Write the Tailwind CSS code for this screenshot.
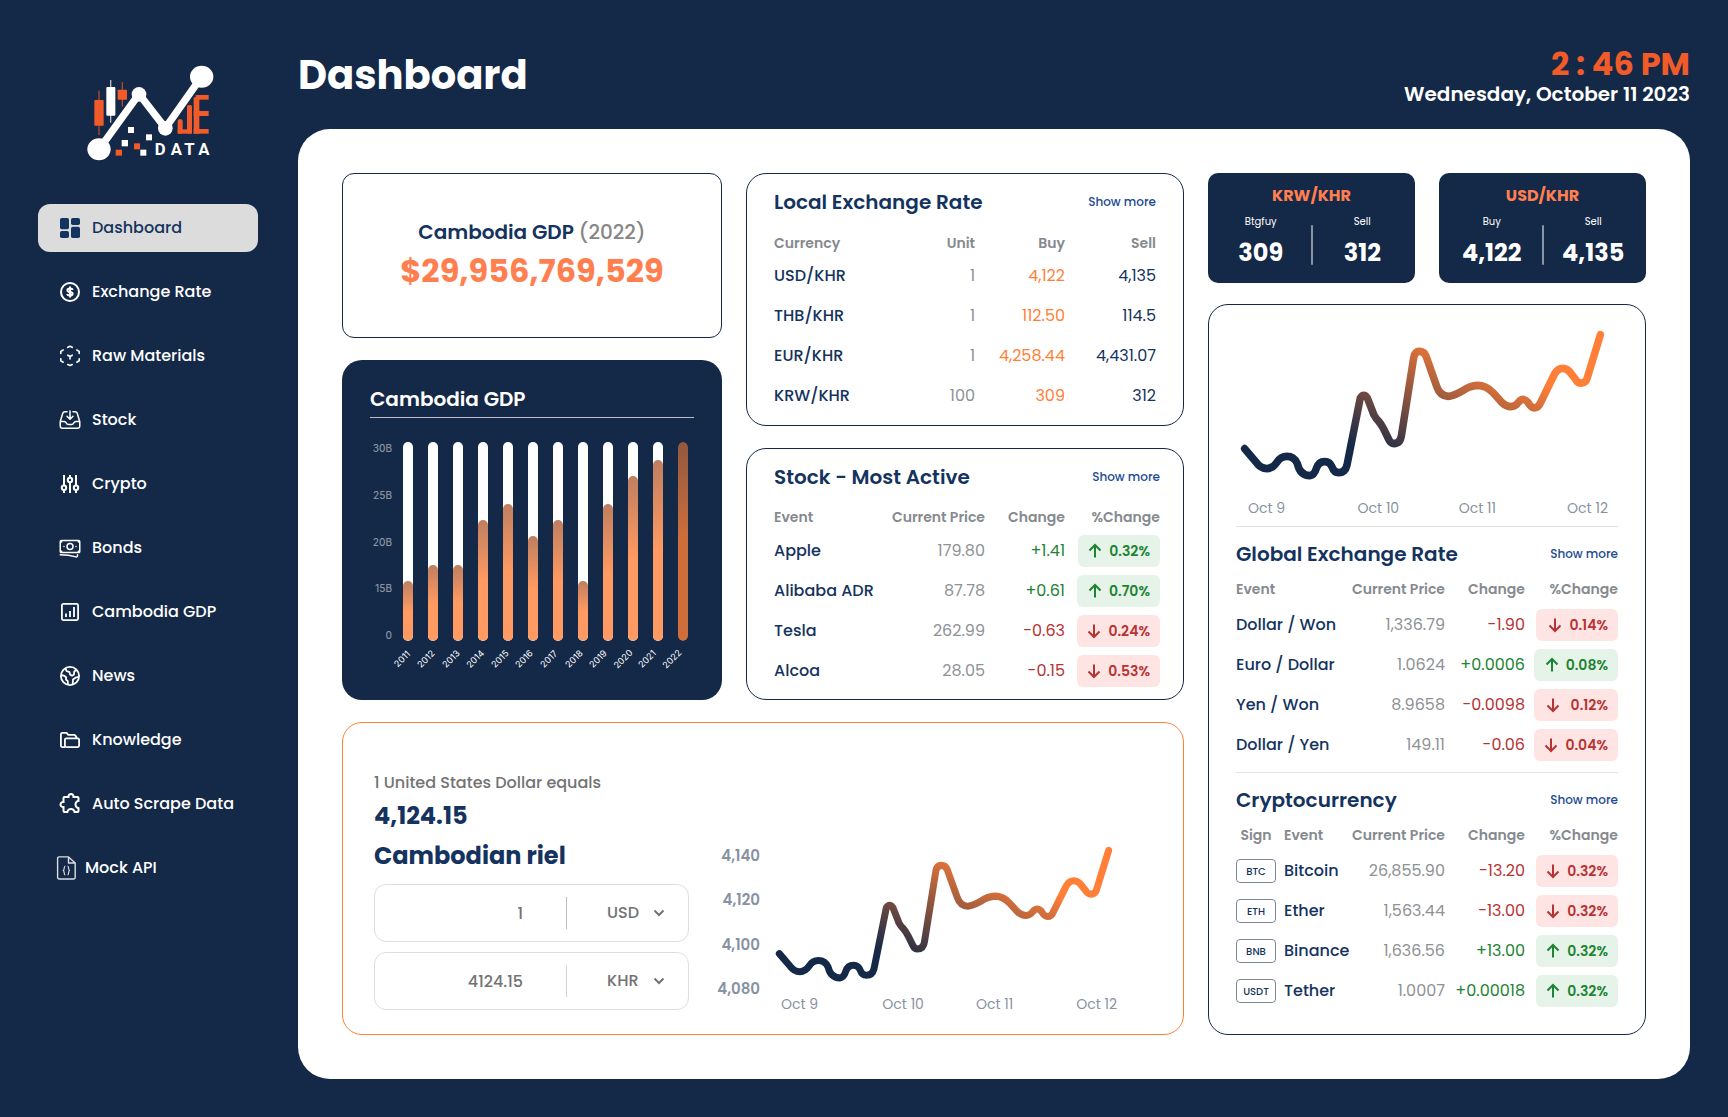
<!DOCTYPE html>
<html lang="en">
<head>
<meta charset="utf-8">
<meta name="viewport" content="width=device-width, initial-scale=1">
<title>JE Data – Dashboard</title>
<script src="https://cdn.jsdelivr.net/npm/@tailwindcss/browser@4"></script>
</head>
<body class="min-h-screen bg-[#142847] font-['Poppins','Inter',sans-serif] text-base text-[#14335e]">

<!-- Shared drawings -->
<svg class="absolute size-0" aria-hidden="true">
  <defs>
    <linearGradient id="trend-color" gradientUnits="userSpaceOnUse" x1="738" y1="500" x2="894" y2="154">
      <stop offset="0" stop-color="#142847"/>
      <stop offset="1" stop-color="#ff7f38"/>
    </linearGradient>
  </defs>
  <symbol id="trend" viewBox="255 105 1017 407" preserveAspectRatio="none"><path d="M268 427 300 464Q312 481 330 481Q346 481 357 465Q368 448 386 448Q406 448 415 468Q422 499 450 500Q462 499 468 480Q474 462 491 462Q506 462 512 478Q517 492 530 492Q548 492 553 472L590 290Q600 275 610 290L628 335Q634 346 640 351Q648 360 655 373L670 403Q675 413 684 413Q702 413 705 390L739 180Q742 163 755 163Q768 163 773 175L803 258Q812 284 835 285Q847 285 875 270Q895 256 917 255Q941 255 960 275L985 302Q997 313 1010 313Q1022 313 1031 301Q1044 286 1057 301Q1066 316 1075 316Q1087 316 1092 303L1131 225Q1140 209 1154 209Q1168 209 1178 224L1190 239Q1196 249 1206 249Q1218 249 1222 237L1259 118" fill="none" stroke="url(#trend-color)" stroke-width="21" stroke-linecap="round" stroke-linejoin="round"/></symbol>
  <symbol id="up" viewBox="0 0 16 16"><path d="M8 14.5V2.5M2.5 7.5 8 2l5.500 5.500" fill="none" stroke="currentColor" stroke-width="2"/></symbol>
  <symbol id="down" viewBox="0 0 16 16"><path d="M8 1.500V13.500M2.500 8.500 8 14l5.500-5.500" fill="none" stroke="currentColor" stroke-width="2"/></symbol>
</svg>

<div class="flex min-h-screen">
  <aside class="w-[298px] shrink-0 pt-[63px] pr-10 pl-[38px]">
    <svg class="mx-auto block h-[98px] w-[134px]" viewBox="183 69 402 294" role="img" aria-label="JE Data">
      <g fill="#f15a29">
        <rect x="223" y="180" width="28" height="77" rx="2"/><rect x="235" y="152" width="4" height="133" opacity=".7"/>
        <rect x="293" y="149" width="28" height="30" rx="2"/><rect x="305" y="126" width="4" height="74" opacity=".7"/>
        <rect x="287" y="329" width="19" height="18"/><rect x="342" y="310" width="18" height="18"/>
        <rect x="473" y="238" width="15" height="43" rx="5"/><rect x="473" y="268" width="43" height="13"/><rect x="501" y="195" width="15" height="86" rx="5"/>
        <rect x="521" y="172" width="17" height="109"/><rect x="527" y="165" width="39" height="14"/><rect x="521" y="213" width="45" height="15"/><rect x="521" y="267" width="45" height="14"/>
      </g>
      <g fill="#fff">
        <rect x="259" y="141" width="27" height="86" rx="3"/><rect x="270" y="120" width="4" height="128" opacity=".7"/>
        <rect x="324" y="261" width="18" height="18"/><rect x="378" y="283" width="18" height="18"/>
        <rect x="305" y="300" width="19" height="19"/><rect x="361" y="329" width="18" height="18"/>
        <path d="M237 328 357 162 436 264 545 110" fill="none" stroke="#fff" stroke-width="22"/>
        <ellipse cx="237" cy="328" rx="35" ry="33"/><circle cx="357" cy="163" r="22"/><circle cx="436" cy="265" r="22"/><ellipse cx="545" cy="110" rx="35" ry="33"/>
        <text x="404 452 493 535" y="346" font-family="Roboto, sans-serif" font-size="50" font-weight="700">DATA</text>
      </g>
    </svg>

    <nav class="mt-[43px] flex flex-col gap-4 font-medium text-white">
      <a href="#" aria-current="page" class="flex h-12 items-center gap-2.5 rounded-xl bg-[#dcdcdc] pl-5 text-[#14335e]">
        <svg class="size-6" viewBox="0 0 24 24" fill="currentColor"><rect x="2" y="2" width="9" height="11.300" rx="1.800"/><rect x="2" y="15" width="9" height="7" rx="1.800"/><rect x="13" y="2" width="9" height="7" rx="1.800"/><rect x="13" y="10.700" width="9" height="11.300" rx="1.800"/></svg>
        Dashboard</a>
      <a href="#" class="flex h-12 items-center gap-2.5 pl-5">
        <svg class="size-6" viewBox="0 0 24 24" fill="none" stroke="currentColor" stroke-width="2"><circle cx="12" cy="12" r="9"/><path d="M14.600 10c-.2-1-1.200-1.600-2.600-1.600s-2.600.6-2.600 1.800 1.100 1.600 2.600 1.800 2.600.7 2.600 1.800-1.100 1.800-2.600 1.800-2.500-.6-2.700-1.700M12 6.500v11"/></svg>
        Exchange Rate</a>
      <a href="#" class="flex h-12 items-center gap-2.5 pl-5">
        <svg class="size-6" viewBox="0 0 24 24" fill="none" stroke="currentColor" stroke-width="1.600" stroke-linecap="round" stroke-linejoin="round"><path d="M9.800 3.300 12 2.300l2.200 1M5.200 6 2.800 7.400v2M18.800 6l2.400 1.400v2M2.800 14.800v2l2.400 1.400M21.200 14.800v2l-2.400 1.400M9.800 20.600 12 21.600l2.200-1M9.800 11.200 12 12.500l2.200-1.300M12 12.500V15"/></svg>
        Raw Materials</a>
      <a href="#" class="flex h-12 items-center gap-2.5 pl-5">
        <svg class="size-6" viewBox="0 0 24 24" fill="none" stroke="currentColor" stroke-width="1.500" stroke-linecap="round" stroke-linejoin="round"><path d="M9 3.750H6.912a2.250 2.250 0 0 0-2.150 1.588L2.350 13.177a2.250 2.250 0 0 0-.1.661V18a2.250 2.250 0 0 0 2.250 2.250h15A2.250 2.250 0 0 0 21.750 18v-4.162c0-.224-.034-.447-.1-.661L19.240 5.338a2.250 2.250 0 0 0-2.150-1.588H15M2.250 13.500h3.860a2.250 2.250 0 0 1 2.012 1.244l.256.512a2.250 2.250 0 0 0 2.013 1.244h3.218a2.250 2.250 0 0 0 2.013-1.244l.256-.512a2.250 2.250 0 0 1 2.013-1.244h3.859M12 3v8.250m0 0-3-3m3 3 3-3"/></svg>
        Stock</a>
      <a href="#" class="flex h-12 items-center gap-2.5 pl-5">
        <svg class="size-6" viewBox="0 0 24 24" fill="none" stroke="currentColor" stroke-width="2"><path d="M6 3v10.500M6 18v3M12 3v2.700M12 10.300V21M18 3v10.500M18 18v3"/><circle cx="6" cy="15.800" r="2.200"/><circle cx="12" cy="8" r="2.200"/><circle cx="18" cy="15.800" r="2.200"/></svg>
        Crypto</a>
      <a href="#" class="flex h-12 items-center gap-2.5 pl-5">
        <svg class="size-6" viewBox="0 0 24 24" fill="none" stroke="currentColor" stroke-width="1.500" stroke-linecap="round" stroke-linejoin="round"><path d="M2.250 18.750a60.070 60.070 0 0 1 15.797 2.101c.727.198 1.453-.342 1.453-1.096V18.750M3.750 4.500v.75A.75.75 0 0 1 3 6h-.75m0 0v-.375c0-.621.504-1.125 1.125-1.125H20.250M2.250 6v9m18-10.500v.75c0 .414.336.75.75.75h.75m-1.500-1.500h.375c.621 0 1.125.504 1.125 1.125v9.750c0 .621-.504 1.125-1.125 1.125h-.375m1.500-1.500H21a.75.75 0 0 0-.75.75v.75m0 0H3.750m0 0h-.375a1.125 1.125 0 0 1-1.125-1.125V15m1.500 1.500v-.75A.75.75 0 0 0 3 15h-.75M15 10.500a3 3 0 1 1-6 0 3 3 0 0 1 6 0Zm3 0h.008v.008H18V10.500Zm-12 0h.008v.008H6V10.500Z"/></svg>
        Bonds</a>
      <a href="#" class="flex h-12 items-center gap-2.5 pl-5">
        <svg class="size-6" viewBox="0 0 24 24" fill="none" stroke="currentColor" stroke-width="1.800"><rect x="3.900" y="3.900" width="16.200" height="16.200" rx="1.500"/><path d="M8 13.500V17M12 11v6M16 7v10"/></svg>
        Cambodia GDP</a>
      <a href="#" class="flex h-12 items-center gap-2.5 pl-5">
        <svg class="size-6" viewBox="0 0 24 24" fill="none" stroke="currentColor" stroke-width="1.800" stroke-linejoin="round"><circle cx="12" cy="12" r="9.100"/><path d="M7.500 4.300 8.500 7l3 1.200.6 2.300 1.900 1.200 2-1.200.2-3L19 5.600M3 11l3.500.8 1.700 1.700-.2 2 1.800 1.700.2 3.800M20.800 12.800l-3.300.9-2.500 1.800-.4 5.300"/></svg>
        News</a>
      <a href="#" class="flex h-12 items-center gap-2.5 pl-5">
        <svg class="size-6" viewBox="0 0 24 24" fill="none" stroke="currentColor" stroke-width="1.800" stroke-linejoin="round"><path d="M7 19.100H4.400A1.500 1.500 0 0 1 2.900 17.600V6.400a1.500 1.500 0 0 1 1.500-1.500H8.600l1.700 2h6.300l1.700 1.700V10"/><rect x="6.900" y="10.300" width="14.200" height="8.800" rx="1.500"/></svg>
        Knowledge</a>
      <a href="#" class="flex h-12 items-center gap-2.5 pl-5">
        <svg class="size-6" viewBox="0 0 24 24" fill="currentColor"><path transform="matrix(-1 0 0 1 23.500 -1)" d="M22 13.500C22 15.260 20.700 16.720 19 16.960V20A2 2 0 0 1 17 22H13.200V21.700A2.700 2.700 0 0 0 10.500 19C9 19 7.800 20.210 7.800 21.700V22H4A2 2 0 0 1 2 20V16.200H2.300C3.790 16.200 5 15 5 13.500C5 12 3.790 10.800 2.300 10.800H2V7A2 2 0 0 1 4 5H7.040C7.280 3.300 8.740 2 10.500 2C12.260 2 13.720 3.300 13.960 5H17A2 2 0 0 1 19 7V10.040C20.700 10.280 22 11.740 22 13.500M17 15H18.500A1.500 1.500 0 0 0 20 13.500A1.500 1.500 0 0 0 18.500 12H17V7H12V5.500A1.500 1.500 0 0 0 10.500 4A1.500 1.500 0 0 0 9 5.500V7H4V9.120C5.760 9.800 7 11.500 7 13.500C7 15.500 5.750 17.200 4 17.880V20H6.120C6.800 18.250 8.500 17 10.500 17C12.500 17 14.200 18.250 14.880 20H17V15Z"/></svg>
        Auto Scrape Data</a>
      <a href="#" class="flex h-12 items-center gap-[7px] pl-4">
        <svg class="size-6" viewBox="0 0 24 24" fill="none" stroke="currentColor" stroke-width="1.400" stroke-linejoin="round" opacity=".85"><path d="M5 .9h9.500L21.200 7v14.600a1.400 1.400 0 0 1-1.400 1.400H5a1.400 1.400 0 0 1-1.400-1.400V2.300A1.400 1.400 0 0 1 5 .9ZM14.500.9V7h6.700"/><path stroke-width="1.200" d="M11.300 10c-1.700 0-.6 4-2 4.500 1.400.5.300 4.500 2 4.500M13.500 10c1.700 0 .6 4 2 4.500-1.400.5-.3 4.500-2 4.500"/></svg>
        Mock API</a>
    </nav>
  </aside>

  <main class="min-w-0 flex-1 pt-[46px] pr-[38px] pb-[38px]">
    <header class="mb-[23px] flex items-start justify-between">
      <h1 class="text-[40px] leading-[58px] font-bold text-white">Dashboard</h1>
      <div class="text-right">
        <p class="text-[32px] leading-9 font-bold text-[#f15a29]">2 : 46 PM</p>
        <p class="text-xl leading-6 font-semibold text-white">Wednesday, October 11 2023</p>
      </div>
    </header>

    <div class="grid grid-cols-[842fr_438fr] gap-6 rounded-[32px] bg-white p-11">
      <div class="flex min-w-0 flex-col gap-[22px]">
        <div class="grid grid-cols-[380fr_438fr] gap-6">
          <div class="flex min-w-0 flex-col gap-[22px]">
            <section class="flex h-[165px] flex-col items-center justify-center rounded-xl border border-[#142847]">
              <h2 class="text-xl leading-[30px] font-semibold">Cambodia GDP <span class="font-medium text-[#868686]">(2022)</span></h2>
              <p class="text-[32px] leading-[48px] font-bold text-[#ff7f50]">$29,956,769,529</p>
            </section>

            <section class="rounded-[20px] bg-[#142847] px-7 pt-6 pb-[35px] text-white">
              <h2 class="border-b border-white/70 pb-[3px] text-xl leading-[30px] font-semibold">Cambodia GDP</h2>
              <div class="mt-6 grid grid-cols-[22px_1fr] gap-x-[11px] pr-1.5 font-['Inter',sans-serif]">
                <div class="flex flex-col justify-between text-right text-[10px] leading-3 font-medium text-[#8a94a3]">
                  <span>30B</span><span>25B</span><span>20B</span><span>15B</span><span>0</span>
                </div>
                <div class="flex h-[199px] justify-between">
                  <div class="flex w-2.5 items-end overflow-hidden rounded-full bg-white"><div class="w-full rounded-full bg-linear-to-b from-[#bf7f60] to-[#ff9a62] to-50%" style="height:30%"></div></div>
                  <div class="flex w-2.5 items-end overflow-hidden rounded-full bg-white"><div class="w-full rounded-full bg-linear-to-b from-[#bf7f60] to-[#ff9a62] to-50%" style="height:38%"></div></div>
                  <div class="flex w-2.5 items-end overflow-hidden rounded-full bg-white"><div class="w-full rounded-full bg-linear-to-b from-[#bf7f60] to-[#ff9a62] to-50%" style="height:38%"></div></div>
                  <div class="flex w-2.5 items-end overflow-hidden rounded-full bg-white"><div class="w-full rounded-full bg-linear-to-b from-[#bf7f60] to-[#ff9a62] to-50%" style="height:61%"></div></div>
                  <div class="flex w-2.5 items-end overflow-hidden rounded-full bg-white"><div class="w-full rounded-full bg-linear-to-b from-[#bf7f60] to-[#ff9a62] to-50%" style="height:69%"></div></div>
                  <div class="flex w-2.5 items-end overflow-hidden rounded-full bg-white"><div class="w-full rounded-full bg-linear-to-b from-[#bf7f60] to-[#ff9a62] to-50%" style="height:53%"></div></div>
                  <div class="flex w-2.5 items-end overflow-hidden rounded-full bg-white"><div class="w-full rounded-full bg-linear-to-b from-[#bf7f60] to-[#ff9a62] to-50%" style="height:61%"></div></div>
                  <div class="flex w-2.5 items-end overflow-hidden rounded-full bg-white"><div class="w-full rounded-full bg-linear-to-b from-[#bf7f60] to-[#ff9a62] to-50%" style="height:30%"></div></div>
                  <div class="flex w-2.5 items-end overflow-hidden rounded-full bg-white"><div class="w-full rounded-full bg-linear-to-b from-[#bf7f60] to-[#ff9a62] to-50%" style="height:69%"></div></div>
                  <div class="flex w-2.5 items-end overflow-hidden rounded-full bg-white"><div class="w-full rounded-full bg-linear-to-b from-[#bf7f60] to-[#ff9a62] to-50%" style="height:83%"></div></div>
                  <div class="flex w-2.5 items-end overflow-hidden rounded-full bg-white"><div class="w-full rounded-full bg-linear-to-b from-[#bf7f60] to-[#ff9a62] to-50%" style="height:91%"></div></div>
                  <div class="flex w-2.5 items-end overflow-hidden rounded-full"><div class="w-full rounded-full bg-linear-to-b from-[#93583f] to-[#ce6f3b] to-50%" style="height:100%"></div></div>
                </div>
                <div class="col-start-2 mt-3 mr-[11px] -ml-1.5 flex justify-between text-[9px] leading-3">
                  <span class="flex w-2.5 justify-center"><span class="-rotate-45">2011</span></span>
                  <span class="flex w-2.5 justify-center"><span class="-rotate-45">2012</span></span>
                  <span class="flex w-2.5 justify-center"><span class="-rotate-45">2013</span></span>
                  <span class="flex w-2.5 justify-center"><span class="-rotate-45">2014</span></span>
                  <span class="flex w-2.5 justify-center"><span class="-rotate-45">2015</span></span>
                  <span class="flex w-2.5 justify-center"><span class="-rotate-45">2016</span></span>
                  <span class="flex w-2.5 justify-center"><span class="-rotate-45">2017</span></span>
                  <span class="flex w-2.5 justify-center"><span class="-rotate-45">2018</span></span>
                  <span class="flex w-2.5 justify-center"><span class="-rotate-45">2019</span></span>
                  <span class="flex w-2.5 justify-center"><span class="-rotate-45">2020</span></span>
                  <span class="flex w-2.5 justify-center"><span class="-rotate-45">2021</span></span>
                  <span class="flex w-2.5 justify-center"><span class="-rotate-45">2022</span></span>
                </div>
              </div>
            </section>
          </div>

          <div class="flex min-w-0 flex-col gap-[22px]">
            <section class="flex-1 rounded-[20px] border border-[#142847] px-[27px] pt-[13px]">
              <div class="mb-3 flex items-center justify-between">
                <h2 class="text-xl leading-[30px] font-semibold">Local Exchange Rate</h2>
                <a href="#" class="text-xs font-medium text-[#1d4a94]">Show more</a>
              </div>
              <table class="w-full table-fixed text-right">
                <colgroup><col><col class="w-[81px]"><col class="w-[90px]"><col class="w-[91px]"></colgroup>
                <thead><tr class="h-[27px] text-sm text-[#868a8f]"><th class="text-left font-semibold">Currency</th><th class="font-semibold">Unit</th><th class="font-semibold">Buy</th><th class="font-semibold">Sell</th></tr></thead>
                <tbody>
                  <tr class="h-10"><th class="text-left font-medium">USD/KHR</th><td class="text-[#8f9296]">1</td><td class="text-[#ff8138]">4,122</td><td>4,135</td></tr>
                  <tr class="h-10"><th class="text-left font-medium">THB/KHR</th><td class="text-[#8f9296]">1</td><td class="text-[#ff8138]">112.50</td><td>114.5</td></tr>
                  <tr class="h-10"><th class="text-left font-medium">EUR/KHR</th><td class="text-[#8f9296]">1</td><td class="text-[#ff8138]">4,258.44</td><td>4,431.07</td></tr>
                  <tr class="h-10"><th class="text-left font-medium">KRW/KHR</th><td class="text-[#8f9296]">100</td><td class="text-[#ff8138]">309</td><td>312</td></tr>
                </tbody>
              </table>
            </section>

            <section class="flex-1 rounded-[20px] border border-[#142847] pt-[13px] pr-[23px] pl-[27px]">
              <div class="mb-3 flex items-center justify-between">
                <h2 class="text-xl leading-[30px] font-semibold">Stock - Most Active</h2>
                <a href="#" class="text-xs font-medium text-[#1d4a94]">Show more</a>
              </div>
              <table class="w-full table-fixed text-right">
                <colgroup><col><col class="w-[103px]"><col class="w-20"><col class="w-[95px]"></colgroup>
                <thead><tr class="h-[27px] text-sm text-[#868a8f]"><th class="text-left font-semibold">Event</th><th class="font-semibold">Current Price</th><th class="font-semibold">Change</th><th class="font-semibold">%Change</th></tr></thead>
                <tbody>
                  <tr class="h-10"><th class="text-left font-medium">Apple</th><td class="text-[#8f9296]">179.80</td><td class="text-[#1c8433]">+1.41</td><td><span class="ml-auto flex h-8 w-[82px] items-center justify-end gap-1.5 rounded-md bg-[#e6f3e9] pr-2.5 text-sm font-semibold text-[#1c8433]"><svg class="size-4"><use href="#up"/></svg>0.32%</span></td></tr>
                  <tr class="h-10"><th class="text-left font-medium">Alibaba ADR</th><td class="text-[#8f9296]">87.78</td><td class="text-[#1c8433]">+0.61</td><td><span class="ml-auto flex h-8 w-[83px] items-center justify-end gap-1.5 rounded-md bg-[#e6f3e9] pr-2.5 text-sm font-semibold text-[#1c8433]"><svg class="size-4"><use href="#up"/></svg>0.70%</span></td></tr>
                  <tr class="h-10"><th class="text-left font-medium">Tesla</th><td class="text-[#8f9296]">262.99</td><td class="text-[#b73333]">-0.63</td><td><span class="ml-auto flex h-8 w-[83px] items-center justify-end gap-1.5 rounded-md bg-[#ffe4e4] pr-2.5 text-sm font-semibold text-[#b73333]"><svg class="size-4"><use href="#down"/></svg>0.24%</span></td></tr>
                  <tr class="h-10"><th class="text-left font-medium">Alcoa</th><td class="text-[#8f9296]">28.05</td><td class="text-[#b73333]">-0.15</td><td><span class="ml-auto flex h-8 w-[83px] items-center justify-end gap-1.5 rounded-md bg-[#ffe4e4] pr-2.5 text-sm font-semibold text-[#b73333]"><svg class="size-4"><use href="#down"/></svg>0.53%</span></td></tr>
                </tbody>
              </table>
            </section>
          </div>
        </div>

        <section class="flex items-end rounded-[20px] border border-[#ff8138] pt-12 pr-[66px] pb-5 pl-[31px]">
          <div class="w-[315px] shrink-0 pb-1">
            <p class="mb-px leading-6 font-medium text-[#737373]">1 United States Dollar equals</p>
            <p class="text-2xl leading-10 font-bold">4,124.15</p>
            <h2 class="text-2xl leading-10 font-bold">Cambodian riel</h2>
            <div class="mt-2 flex flex-col gap-2.5 font-medium text-[#737373]">
              <div class="flex h-[58px] items-center rounded-xl border border-[#dedede]">
                <label for="amount-from" class="sr-only">Amount in US dollars</label>
                <input id="amount-from" type="text" inputmode="decimal" value="1" class="h-full min-w-0 flex-1 pr-[43px] text-right outline-none">
                <span class="h-8 w-px bg-[#bdbdbd]"></span>
                <div class="relative w-[121px] shrink-0">
                  <label for="currency-from" class="sr-only">From currency</label>
                  <select id="currency-from" class="w-full appearance-none pr-8 pl-10 outline-none"><option>USD</option><option>KHR</option></select>
                  <svg class="pointer-events-none absolute top-1.5 right-[23px] size-3" viewBox="0 0 12 12" fill="none" stroke="currentColor" stroke-width="2"><path d="M1.500 3.500 6 8l4.500-4.500"/></svg>
                </div>
              </div>
              <div class="flex h-[58px] items-center rounded-xl border border-[#dedede]">
                <label for="amount-to" class="sr-only">Amount in Cambodian riel</label>
                <input id="amount-to" type="text" inputmode="decimal" value="4124.15" class="h-full min-w-0 flex-1 pr-[43px] text-right outline-none">
                <span class="h-8 w-px bg-[#d4d4d4]"></span>
                <div class="relative w-[121px] shrink-0">
                  <label for="currency-to" class="sr-only">To currency</label>
                  <select id="currency-to" class="w-full appearance-none pr-8 pl-10 outline-none"><option>KHR</option><option>USD</option></select>
                  <svg class="pointer-events-none absolute top-1.5 right-[23px] size-3" viewBox="0 0 12 12" fill="none" stroke="currentColor" stroke-width="2"><path d="M1.500 3.500 6 8l4.500-4.500"/></svg>
                </div>
              </div>
            </div>
          </div>
          <div class="mb-[15px] flex h-[153px] w-[71px] shrink-0 flex-col justify-between text-right text-[15px] leading-5 font-semibold text-[#8792a2]">
            <span>4,140</span><span>4,120</span><span>4,100</span><span>4,080</span>
          </div>
          <div class="ml-[15px] min-w-0 flex-1">
            <div class="pr-1">
              <svg class="block h-[136px] w-full" role="img" aria-label="USD to KHR, Oct 9 to Oct 12"><use href="#trend"/></svg>
            </div>
            <div class="mt-3 grid grid-cols-[92fr_85fr_91fr_auto] pl-1.5 text-sm leading-5 text-[#8792a2]"><span>Oct 9</span><span>Oct 10</span><span>Oct 11</span><span>Oct 12</span></div>
          </div>
        </section>
      </div>

      <div class="flex min-w-0 flex-col gap-[21px]">
        <div class="grid grid-cols-2 gap-6 text-center text-white">
          <section class="h-[110px] rounded-[10px] bg-[#142847] pt-[11px]">
            <h2 class="leading-6 font-bold text-[#ff7f50]">KRW/KHR</h2>
            <div class="mt-1.5 flex items-center px-[3px]">
              <div class="flex-1"><p class="text-[10px] leading-4">Btgfuy</p><p class="text-2xl leading-[46px] font-bold">309</p></div>
              <span class="h-10 w-0.5 rounded-full bg-white/50"></span>
              <div class="flex-1"><p class="text-[10px] leading-4">Sell</p><p class="text-2xl leading-[46px] font-bold">312</p></div>
            </div>
          </section>
          <section class="h-[110px] rounded-[10px] bg-[#142847] pt-[11px]">
            <h2 class="leading-6 font-bold text-[#ff7f50]">USD/KHR</h2>
            <div class="mt-1.5 flex items-center px-[3px]">
              <div class="flex-1"><p class="text-[10px] leading-4">Buy</p><p class="text-2xl leading-[46px] font-bold">4,122</p></div>
              <span class="h-10 w-0.5 rounded-full bg-white/50"></span>
              <div class="flex-1"><p class="text-[10px] leading-4">Sell</p><p class="text-2xl leading-[46px] font-bold">4,135</p></div>
            </div>
          </section>
        </div>

        <section class="flex-1 rounded-[20px] border border-[#142847] px-[27px] pt-[25px]">
          <div class="pr-[13px] pl-1">
            <svg class="block h-[150px] w-full" role="img" aria-label="Global rate, Oct 9 to Oct 12"><use href="#trend"/></svg>
          </div>
          <div class="mt-[18px] grid grid-cols-[92fr_85fr_91fr_auto] pr-2.5 pl-3 text-sm leading-5 text-[#8792a2]"><span>Oct 9</span><span>Oct 10</span><span>Oct 11</span><span>Oct 12</span></div>

          <div class="mt-2 mb-[3px] flex items-center justify-between border-t border-[#e2e2e2] pt-3">
            <h2 class="text-xl leading-[30px] font-semibold">Global Exchange Rate</h2>
            <a href="#" class="text-xs font-medium text-[#1d4a94]">Show more</a>
          </div>
          <table class="w-full table-fixed text-right">
            <colgroup><col><col class="w-[99px]"><col class="w-20"><col class="w-[93px]"></colgroup>
            <thead><tr class="h-[33px] text-sm text-[#868a8f]"><th class="text-left font-semibold">Event</th><th class="font-semibold">Current Price</th><th class="font-semibold">Change</th><th class="font-semibold">%Change</th></tr></thead>
            <tbody>
              <tr class="h-10"><th class="text-left font-medium">Dollar / Won</th><td class="text-[#8f9296]">1,336.79</td><td class="text-[#b73333]">-1.90</td><td><span class="ml-auto flex h-8 w-[82px] items-center justify-end gap-1.5 rounded-md bg-[#ffe4e4] pr-2.5 text-sm font-semibold text-[#b73333]"><svg class="size-4"><use href="#down"/></svg>0.14%</span></td></tr>
              <tr class="h-10"><th class="text-left font-medium">Euro / Dollar</th><td class="text-[#8f9296]">1.0624</td><td class="text-[#1c8433]">+0.0006</td><td><span class="ml-auto flex h-8 w-[84px] items-center justify-end gap-1.5 rounded-md bg-[#e6f3e9] pr-2.5 text-sm font-semibold text-[#1c8433]"><svg class="size-4"><use href="#up"/></svg>0.08%</span></td></tr>
              <tr class="h-10"><th class="text-left font-medium">Yen / Won</th><td class="text-[#8f9296]">8.9658</td><td class="text-[#b73333]">-0.0098</td><td><span class="ml-auto flex h-8 w-[84px] items-center justify-end gap-2.5 rounded-md bg-[#ffe4e4] pr-2.5 text-sm font-semibold text-[#b73333]"><svg class="size-4"><use href="#down"/></svg>0.12%</span></td></tr>
              <tr class="h-10"><th class="text-left font-medium">Dollar / Yen</th><td class="text-[#8f9296]">149.11</td><td class="text-[#b73333]">-0.06</td><td><span class="ml-auto flex h-8 w-[84px] items-center justify-end gap-1.5 rounded-md bg-[#ffe4e4] pr-2.5 text-sm font-semibold text-[#b73333]"><svg class="size-4"><use href="#down"/></svg>0.04%</span></td></tr>
            </tbody>
          </table>

          <div class="mt-[7px] mb-[3px] flex items-center justify-between border-t border-[#e2e2e2] pt-3">
            <h2 class="text-xl leading-[30px] font-semibold">Cryptocurrency</h2>
            <a href="#" class="text-xs font-medium text-[#1d4a94]">Show more</a>
          </div>
          <table class="w-full table-fixed text-right">
            <colgroup><col class="w-12"><col><col class="w-[99px]"><col class="w-20"><col class="w-[93px]"></colgroup>
            <thead><tr class="h-[33px] text-sm text-[#868a8f]"><th class="pr-2 text-center font-semibold">Sign</th><th class="text-left font-semibold">Event</th><th class="font-semibold">Current Price</th><th class="font-semibold">Change</th><th class="font-semibold">%Change</th></tr></thead>
            <tbody>
              <tr class="h-10"><td><span class="flex h-6 w-10 items-center justify-center rounded-sm border border-[#7d899b] text-[10px] font-medium">BTC</span></td><th class="text-left font-medium">Bitcoin</th><td class="text-[#8f9296]">26,855.90</td><td class="text-[#b73333]">-13.20</td><td><span class="ml-auto flex h-8 w-[82px] items-center justify-end gap-1.5 rounded-md bg-[#ffe4e4] pr-2.5 text-sm font-semibold text-[#b73333]"><svg class="size-4"><use href="#down"/></svg>0.32%</span></td></tr>
              <tr class="h-10"><td><span class="flex h-6 w-10 items-center justify-center rounded-sm border border-[#7d899b] text-[10px] font-medium">ETH</span></td><th class="text-left font-medium">Ether</th><td class="text-[#8f9296]">1,563.44</td><td class="text-[#b73333]">-13.00</td><td><span class="ml-auto flex h-8 w-[82px] items-center justify-end gap-1.5 rounded-md bg-[#ffe4e4] pr-2.5 text-sm font-semibold text-[#b73333]"><svg class="size-4"><use href="#down"/></svg>0.32%</span></td></tr>
              <tr class="h-10"><td><span class="flex h-6 w-10 items-center justify-center rounded-sm border border-[#7d899b] text-[10px] font-medium">BNB</span></td><th class="text-left font-medium">Binance</th><td class="text-[#8f9296]">1,636.56</td><td class="text-[#1c8433]">+13.00</td><td><span class="ml-auto flex h-8 w-[82px] items-center justify-end gap-1.5 rounded-md bg-[#e6f3e9] pr-2.5 text-sm font-semibold text-[#1c8433]"><svg class="size-4"><use href="#up"/></svg>0.32%</span></td></tr>
              <tr class="h-10"><td><span class="flex h-6 w-10 items-center justify-center rounded-sm border border-[#7d899b] text-[10px] font-medium">USDT</span></td><th class="text-left font-medium">Tether</th><td class="text-[#8f9296]">1.0007</td><td class="text-[#1c8433]">+0.00018</td><td><span class="ml-auto flex h-8 w-[82px] items-center justify-end gap-1.5 rounded-md bg-[#e6f3e9] pr-2.5 text-sm font-semibold text-[#1c8433]"><svg class="size-4"><use href="#up"/></svg>0.32%</span></td></tr>
            </tbody>
          </table>
        </section>
      </div>
    </div>
  </main>
</div>
</body>
</html>
